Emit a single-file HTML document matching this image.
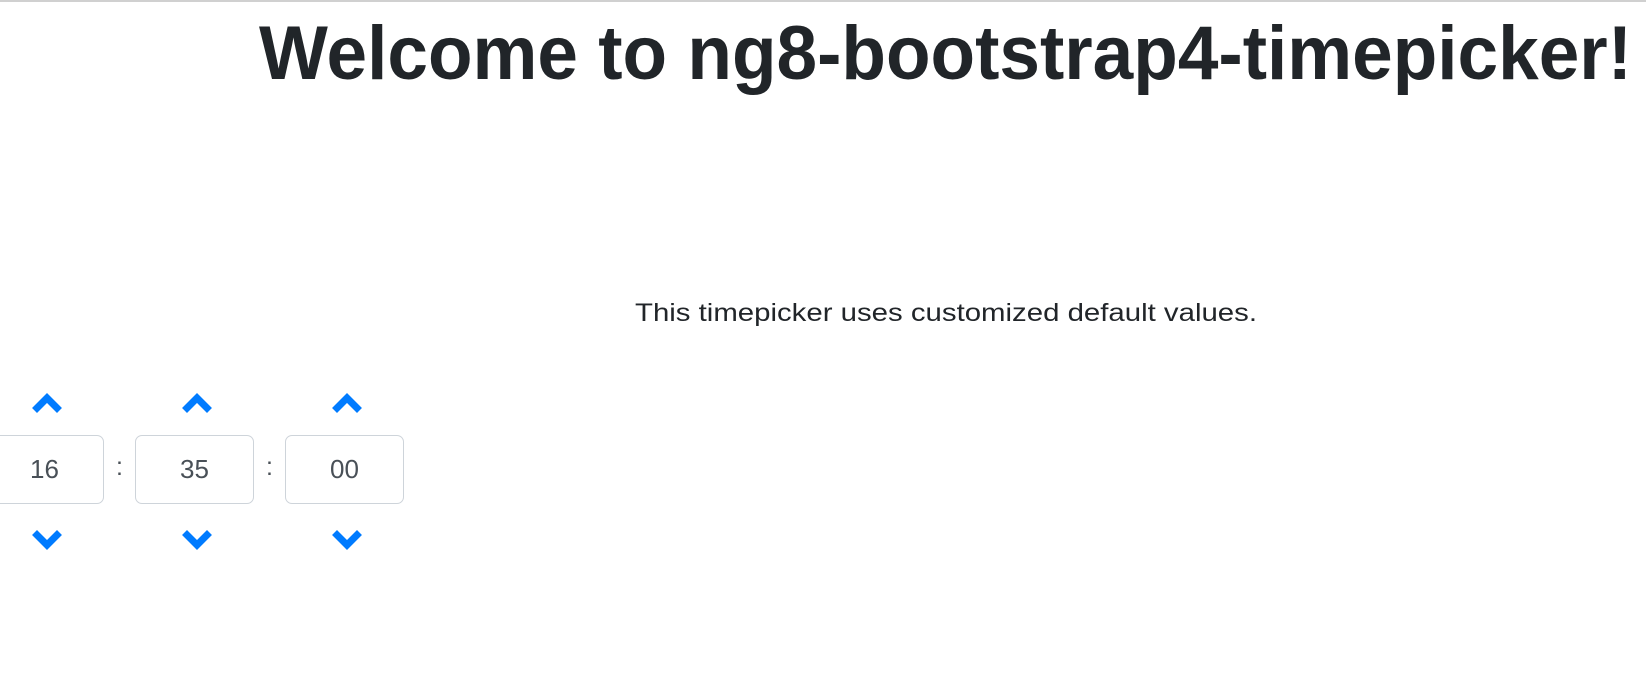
<!DOCTYPE html>
<html><head><style>
html,body{margin:0;padding:0;width:1646px;height:674px;overflow:hidden;background:#fff;font-family:"Liberation Sans",sans-serif;}
.top{position:absolute;left:0;top:0;width:1646px;height:2px;background:#d0d0d0;}
.box{position:absolute;top:435px;width:117px;height:67px;border:1px solid #ced4da;border-radius:7px;font-size:26px;color:#495057;text-align:center;line-height:67px;}
.col{position:absolute;top:453px;font-size:25px;color:#495057;}
</style></head><body>
<div class="top"></div>
<svg width="1646" height="674" style="position:absolute;left:0;top:0">
<text x="259" y="79" font-family="Liberation Sans" font-weight="bold" font-size="76" fill="#212529" textLength="1373" lengthAdjust="spacingAndGlyphs">Welcome to ng8-bootstrap4-timepicker!</text>
<text x="635" y="321" font-family="Liberation Sans" font-size="25" fill="#212529" textLength="622" lengthAdjust="spacingAndGlyphs">This timepicker uses customized default values.</text>
</svg>
<div class="box" style="left:-15px">16</div>
<div class="box" style="left:135px">35</div>
<div class="box" style="left:285px">00</div>
<div class="col" style="left:116px">:</div>
<div class="col" style="left:266px">:</div>
<svg width="1646" height="674" style="position:absolute;left:0;top:0">
<g fill="none" stroke="#007bff" stroke-width="7" stroke-linecap="square" stroke-linejoin="miter">
<path d="M37 408 L47 398 L57 408"/><path d="M187 408 L197 398 L207 408"/><path d="M337 408 L347 398 L357 408"/>
<path d="M37 535 L47 545 L57 535"/><path d="M187 535 L197 545 L207 535"/><path d="M337 535 L347 545 L357 535"/>
</g></svg>
</body></html>
